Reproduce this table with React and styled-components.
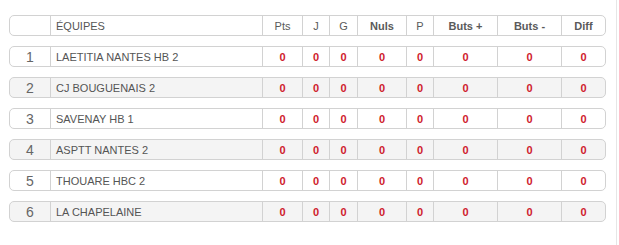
import React from 'react';
import styled, { createGlobalStyle } from 'styled-components';

const GlobalStyle = createGlobalStyle`
  body {
    margin: 0;
    background: #fff;
    font-family: "Liberation Sans", Arial, sans-serif;
  }
`;

const Panel = styled.div`
  width: 617px;
  height: 245px;
  box-sizing: border-box;
  border-right: 1px solid #e6e6e6;
  padding: 15px 0 0 9px;
  display: flex;
  flex-direction: column;
  gap: 10px;
`;

const Row = styled.div`
  width: 597px;
  height: 21px;
  box-sizing: border-box;
  display: grid;
  grid-template-columns: 40px 212px 40px 27px 28px 49px 27px 64px 64px 44px;
  border: 1px solid #d2d2d2;
  border-radius: 5px;
  background: ${props => (props.shaded ? '#f4f4f4' : '#fff')};
  color: #5a5a5a;
`;

const Cell = styled.div`
  display: flex;
  align-items: center;
  justify-content: ${props => (props.left ? 'flex-start' : 'center')};
  padding-left: ${props => (props.left ? '5px' : '0')};
  border-left: ${props => (props.first ? 'none' : '1px solid #d2d2d2')};
  font-size: 11px;
  font-weight: ${props => (props.bold ? 700 : 400)};
  white-space: nowrap;
`;

const Rank = styled(Cell)`
  font-size: 14px;
  color: #666;
`;

const Team = styled(Cell)`
  font-size: 11px;
  color: #555;
`;

const Score = styled(Cell)`
  color: #cf1b2c;
  font-weight: 700;
`;

const columns = [
  { label: 'Pts' },
  { label: 'J' },
  { label: 'G' },
  { label: 'Nuls', bold: true },
  { label: 'P' },
  { label: 'Buts +', bold: true },
  { label: 'Buts -', bold: true },
  { label: 'Diff', bold: true },
];

const teams = [
  'LAETITIA NANTES HB 2',
  'CJ BOUGUENAIS 2',
  'SAVENAY HB 1',
  'ASPTT NANTES 2',
  'THOUARE HBC 2',
  'LA CHAPELAINE',
];

const App = () => (
  <>
    <GlobalStyle />
    <Panel>
      <Row>
        <Cell first />
        <Team left>ÉQUIPES</Team>
        {columns.map(col => (
          <Cell key={col.label} bold={col.bold}>{col.label}</Cell>
        ))}
      </Row>
      {teams.map((team, i) => (
        <Row key={team} shaded={i % 2 === 1}>
          <Rank first>{i + 1}</Rank>
          <Team left>{team}</Team>
          {columns.map(col => (
            <Score key={col.label}>0</Score>
          ))}
        </Row>
      ))}
    </Panel>
  </>
);

export default App;
